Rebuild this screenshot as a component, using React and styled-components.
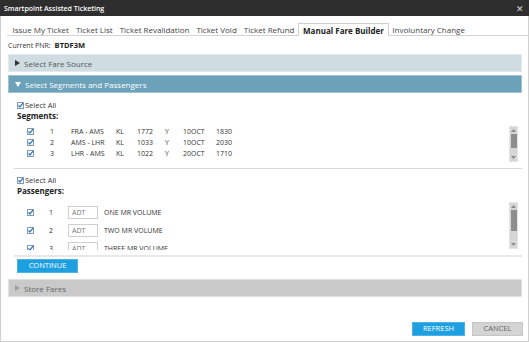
import React from "react";
import styled, { createGlobalStyle } from "styled-components";

const Global = createGlobalStyle`
  html, body { margin: 0; padding: 0; background: #fff; }
  body { font-family: "Open Sans", "Noto Sans", sans-serif; color: #333; }
  * { box-sizing: border-box; }
`;

const Window = styled.div`
  width: 529px;
  height: 342px;
  display: flex;
  flex-direction: column;
  background: #fff;
  overflow: hidden;
`;

const TitleBar = styled.div`
  height: 16px;
  flex: none;
  background: #2e2e2e;
  color: #fff;
  display: flex;
  align-items: center;
  justify-content: space-between;
  padding: 0 5px 0 4px;
  font-size: 7px;
  font-weight: 600;
`;

const Close = styled.span`
  font-size: 9px;
  color: #d8d8d8;
  font-weight: 400;
  line-height: 1;
`;

const Body = styled.div`
  flex: 1;
  min-height: 0;
  display: flex;
  flex-direction: column;
  border: 1px solid #d0d0d0;
  border-top: none;
`;

const TabStrip = styled.div`
  margin: 7px 0 0 6px;
  height: 13px;
  flex: none;
  display: flex;
  align-items: flex-end;
  padding-left: 2px;
  border-bottom: 1px solid #d4d4d4;
`;

const Tab = styled.div`
  height: ${(p) => (p.$active ? 13 : 12)}px;
  display: flex;
  align-items: center;
  padding: 0 ${(p) => (p.$active ? 4 : 2.5)}px;
  border: 1px solid ${(p) => (p.$active ? "#d0d0d0" : "transparent")};
  border-bottom: none;
  margin-bottom: ${(p) => (p.$active ? -1 : 0)}px;
  background: #fff;
  font-size: 8px;
  font-weight: ${(p) => (p.$active ? 700 : 400)};
  color: ${(p) => (p.$active ? "#222" : "#444")};
  white-space: nowrap;
`;

const PnrRow = styled.div`
  margin-top: 4px;
  height: 10px;
  display: flex;
  align-items: center;
  gap: 4px;
  padding-left: 7px;
  font-size: 7px;
  color: #333;
`;

const PnrValue = styled.span`
  font-weight: 700;
  font-size: 7.5px;
  color: #222;
`;

const panelStyles = {
  source: { bg: "#cfdce2", border: "#e2eaee", color: "#555" },
  open: { bg: "#6ca1ba", border: "#9fc2d2", color: "#fff" },
  store: { bg: "#c9c9c9", border: "#e0e0e0", color: "#666" },
};

const Panel = styled.div`
  margin: ${(p) => p.$top}px 6px 0 7px;
  height: 18px;
  flex: none;
  display: flex;
  align-items: center;
  gap: 4px;
  padding-left: 6px;
  font-size: 8px;
  background: ${(p) => panelStyles[p.$kind].bg};
  border: 1px solid ${(p) => panelStyles[p.$kind].border};
  color: ${(p) => panelStyles[p.$kind].color};
`;

const Section = styled.div`
  margin: 0 6px 0 13px;
  display: flex;
  flex-direction: column;
`;

const SelectAllRow = styled.div`
  margin-top: ${(p) => p.$top}px;
  height: 10px;
  display: flex;
  align-items: center;
  gap: 1px;
  padding-left: 3px;
  font-size: 7.5px;
  color: #333;
`;

const SectionLabel = styled.div`
  height: 11px;
  display: flex;
  align-items: center;
  padding-left: 3px;
  font-size: 8px;
  font-weight: 700;
  color: #222;
`;

const ListArea = styled.div`
  margin-top: ${(p) => p.$top}px;
  height: ${(p) => p.$h}px;
  display: flex;
  overflow: hidden;
`;

const Rows = styled.div`
  flex: 1;
  padding: ${(p) => p.$pt}px 0 0 13px;
  display: flex;
  flex-direction: column;
`;

const SegRow = styled.div`
  height: 11px;
  display: grid;
  grid-template-columns: 23px 21px 45px 21px 28px 18px 33px auto;
  align-items: center;
  font-size: 7px;
  color: #333;
  white-space: nowrap;
`;

const PaxRow = styled.div`
  height: 18px;
  flex: none;
  display: grid;
  grid-template-columns: 22px 19px 36px auto;
  align-items: center;
  font-size: 7px;
  color: #333;
  white-space: nowrap;
`;

const TypeBox = styled.div`
  width: 30px;
  height: 13px;
  border: 1px solid #cfcfcf;
  display: flex;
  align-items: center;
  padding-left: 3px;
  color: #777;
  font-size: 7px;
`;

const ScrollTrack = styled.div`
  width: 9px;
  margin: 1px 4px 1px 0;
  background: #d6d6d6;
  border: 1px solid #e4e4e4;
  display: flex;
  flex-direction: column;
  align-items: center;
`;

const ScrollArrow = styled.div`
  height: 7px;
  width: 100%;
  display: flex;
  align-items: center;
  justify-content: center;
`;

const Thumb = styled.div`
  width: 6px;
  height: ${(p) => p.$h}px;
  background: #8d8d8d;
`;

const ScrollGap = styled.div`
  flex: 1;
`;

const Separator = styled.div`
  margin-top: 5px;
  height: ${(p) => p.$h}px;
  background: ${(p) => p.$color};
`;

const Button = styled.button`
  height: 14px;
  width: ${(p) => p.$w}px;
  padding: 0;
  border: 1px solid ${(p) => (p.$kind === "primary" ? "#4bb3e8" : "#c6c6c6")};
  background: ${(p) => (p.$kind === "primary" ? "#1e9fe0" : "#d4d4d4")};
  color: ${(p) => (p.$kind === "primary" ? "#fff" : "#666")};
  font-family: "Open Sans", "Noto Sans", sans-serif;
  font-size: 7.5px;
  text-transform: uppercase;
  display: flex;
  align-items: center;
  justify-content: center;
  line-height: 1;
`;

const ContinueWrap = styled.div`
  margin: 2px 0 0 3px;
  display: flex;
`;

const Footer = styled.div`
  margin-top: auto;
  display: flex;
  justify-content: flex-end;
  gap: 7px;
  padding: 0 5px 5px 0;
`;

const Check = () => (
  <svg width="7" height="7" viewBox="0 0 7 7" style={{ flex: "none" }}>
    <rect x="0.5" y="0.5" width="6" height="6" fill="#fff" stroke="#8498b2" />
    <path d="M1.4 3.4 L2.9 5 L6 1.2" stroke="#2a76c4" strokeWidth="1.2" fill="none" />
  </svg>
);

const Triangle = ({ dir, color }) =>
  dir === "down" ? (
    <svg width="6" height="5" viewBox="0 0 6 5">
      <path d="M0 0 H6 L3 5 Z" fill={color} />
    </svg>
  ) : (
    <svg width="5" height="6" viewBox="0 0 5 6">
      <path d="M0 0 V6 L5 3 Z" fill={color} />
    </svg>
  );

const ArrowIcon = ({ up }) => (
  <svg width="5" height="3" viewBox="0 0 5 3">
    <path d={up ? "M0 3 H5 L2.5 0 Z" : "M0 0 H5 L2.5 3 Z"} fill="#8a8a8a" />
  </svg>
);

const Scrollbar = ({ thumb }) => (
  <ScrollTrack>
    <ScrollArrow>
      <ArrowIcon up />
    </ScrollArrow>
    <Thumb $h={thumb} />
    <ScrollGap />
    <ScrollArrow>
      <ArrowIcon />
    </ScrollArrow>
  </ScrollTrack>
);

const tabs = [
  "Issue My Ticket",
  "Ticket List",
  "Ticket Revalidation",
  "Ticket Void",
  "Ticket Refund",
  "Manual Fare Builder",
  "Involuntary Change",
];

const segments = [
  ["1", "FRA - AMS", "KL", "1772", "Y", "10OCT", "1830"],
  ["2", "AMS - LHR", "KL", "1033", "Y", "10OCT", "2030"],
  ["3", "LHR - AMS", "KL", "1022", "Y", "20OCT", "1710"],
];

const passengers = [
  ["1", "ONE MR VOLUME"],
  ["2", "TWO MR VOLUME"],
  ["3", "THREE MR VOLUME"],
];

export default function App() {
  return (
    <Window>
      <Global />
      <TitleBar>
        <span>Smartpoint Assisted Ticketing</span>
        <Close>✕</Close>
      </TitleBar>
      <Body>
        <TabStrip>
          {tabs.map((t) => (
            <Tab key={t} $active={t === "Manual Fare Builder"}>
              {t}
            </Tab>
          ))}
        </TabStrip>
        <PnrRow>
          <span>Current PNR:</span>
          <PnrValue>BTDF3M</PnrValue>
        </PnrRow>
        <Panel $kind="source" $top={4}>
          <Triangle dir="right" color="#333" />
          <span>Select Fare Source</span>
        </Panel>
        <Panel $kind="open" $top={3}>
          <Triangle dir="down" color="#fff" />
          <span>Select Segments and Passengers</span>
        </Panel>
        <Section>
          <SelectAllRow $top={7}>
            <Check />
            <span>Select All</span>
          </SelectAllRow>
          <SectionLabel>Segments:</SectionLabel>
          <ListArea $top={4} $h={38}>
            <Rows $pt={0.5}>
              {segments.map((s) => (
                <SegRow key={s[0]}>
                  <Check />
                  {s.map((c, i) => (
                    <span key={i}>{c}</span>
                  ))}
                </SegRow>
              ))}
            </Rows>
            <Scrollbar thumb={14} />
          </ListArea>
          <Separator $h={1} $color="#d9d9d9" />
          <SelectAllRow $top={6}>
            <Check />
            <span>Select All</span>
          </SelectAllRow>
          <SectionLabel>Passengers:</SectionLabel>
          <ListArea $top={5} $h={49}>
            <Rows $pt={2}>
              {passengers.map((p) => (
                <PaxRow key={p[0]}>
                  <Check />
                  <span>{p[0]}</span>
                  <TypeBox>ADT</TypeBox>
                  <span>{p[1]}</span>
                </PaxRow>
              ))}
            </Rows>
            <Scrollbar thumb={21} />
          </ListArea>
          <Separator $h={2} $color="#e8e8e8" />
          <ContinueWrap>
            <Button $kind="primary" $w={61}>Continue</Button>
          </ContinueWrap>
        </Section>
        <Panel $kind="store" $top={6}>
          <Triangle dir="right" color="#a0a0a0" />
          <span>Store Fares</span>
        </Panel>
        <Footer>
          <Button $kind="primary" $w={53}>Refresh</Button>
          <Button $kind="secondary" $w={51}>Cancel</Button>
        </Footer>
      </Body>
    </Window>
  );
}
